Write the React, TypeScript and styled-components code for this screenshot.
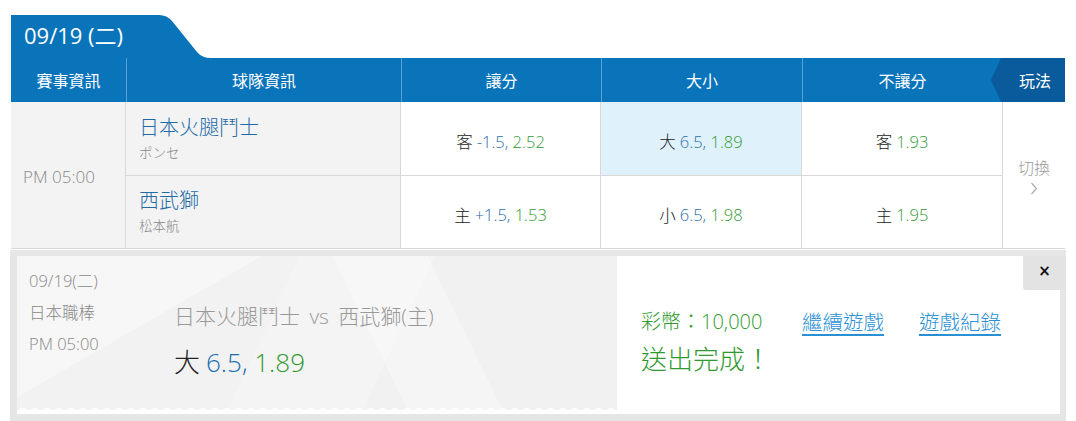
import styled, { createGlobalStyle } from 'styled-components'

const GlobalStyle = createGlobalStyle`
  html, body {
    margin: 0;
    padding: 0;
    background: #fff;
    font-family: "Open Sans", "Noto Sans CJK TC", sans-serif;
    font-weight: 300;
  }
`

const Page = styled.div`
  width: 1076px;
  height: 421px;
  padding: 15px 0 0 11px;
  box-sizing: border-box;
  overflow: hidden;
`

const DateTab = styled.div`
  width: 200px;
  height: 43px;
  background: #0a74bb;
  color: #fff;
  font-size: 22px;
  font-weight: 400;
  line-height: 40px;
  padding-left: 13px;
  box-sizing: border-box;
  clip-path: path('M0 43 L0 0 L148 0 Q156 0 161 6 L186 37 Q191 43 200 43 Z');
`

const Table = styled.div`
  width: 1054px;
  display: grid;
  grid-template-columns: 115px 275px 200px 201px 200px 63px;
  grid-template-rows: 44px 74px 73px;
  border-right: 1px solid #d8d8d8;
  box-sizing: border-box;
`

const HeadCell = styled.div`
  background: #0a74bb;
  color: #fff;
  font-size: 16px;
  font-weight: 400;
  display: flex;
  align-items: center;
  justify-content: center;
  border-left: 1px solid #5a9fd2;
  &:first-child {
    border-left: none;
  }
`

const PlayHead = styled.div`
  background: #0a74bb;
  position: relative;
  &::before {
    content: '';
    position: absolute;
    right: 0;
    top: 0;
    width: 74px;
    height: 44px;
    background: #0a5b9c;
    clip-path: polygon(10px 0, 100% 0, 100% 100%, 10px 100%, 0 50%);
  }
  span {
    position: relative;
    color: #fff;
    font-size: 16px;
    font-weight: 400;
    display: flex;
    height: 100%;
    align-items: center;
    justify-content: flex-end;
    padding-right: 14px;
  }
`

const TimeCell = styled.div`
  grid-column: 1;
  grid-row: 2 / span 2;
  background: #f3f3f3;
  border-right: 1px solid #d8d8d8;
  border-bottom: 1px solid #d8d8d8;
  color: #888;
  font-size: 17px;
  display: flex;
  align-items: center;
  padding: 2px 0 0 12px;
`

const TeamCell = styled.div<{ $first?: boolean }>`
  grid-column: 2;
  box-sizing: border-box;
  background: #f3f3f3;
  border-bottom: 1px solid #d8d8d8;
  border-right: 1px solid #d8d8d8;
  padding: ${({ $first }) => ($first ? 12 : 11)}px 0 0 13px;
`

const TeamName = styled.div`
  color: #1d6aa6;
  font-size: 20px;
  line-height: 27px;
`

const Pitcher = styled.div`
  color: #888;
  font-size: 13.5px;
  line-height: 24px;
`

const OddsCell = styled.div<{ $active?: boolean; $last?: boolean }>`
  box-sizing: border-box;
  background: ${({ $active }) => ($active ? '#dff2fb' : '#fff')};
  border-bottom: 1px solid #d8d8d8;
  border-right: ${({ $last }) => ($last ? 'none' : '1px solid #d8d8d8')};
  display: flex;
  align-items: center;
  justify-content: center;
  padding-top: 5px;
  font-size: 16.5px;
  color: #222;
  gap: 4px;
`

const Line = styled.span`
  color: #2a6fa9;
`

const Price = styled.span`
  color: #339933;
`

const SwitchCell = styled.div`
  grid-column: 6;
  grid-row: 2 / span 2;
  border-left: 1px solid #d8d8d8;
  border-bottom: 1px solid #d8d8d8;
  background: #fff;
  color: #9a9a9a;
  font-size: 16px;
  display: flex;
  flex-direction: column;
  align-items: center;
  justify-content: center;
  line-height: 22px;
  padding-top: 2px;
`

const Chevron = styled.svg`
  width: 8px;
  height: 13px;
  margin-top: 3px;
`

const Panel = styled.div`
  width: 1056px;
  margin: 1px 0 0 -1px;
  height: 171px;
  background: #e6e6e6;
  padding: 6px 6px 7px 7px;
  box-sizing: border-box;
  position: relative;
`

const PanelInner = styled.div`
  display: flex;
  height: 100%;
  background: #fff;
`

const Ticket = styled.div`
  width: 600px;
  position: relative;
  background:
    linear-gradient(150deg, rgba(255,255,255,0.35) 0 28%, transparent 28% 100%),
    linear-gradient(64deg, transparent 0 58%, rgba(255,255,255,0.3) 58% 72%, transparent 72%),
    linear-gradient(115deg, #f2f2f2 0 42%, #f4f4f4 42% 62%, #f1f1f1 62%);
  display: grid;
  grid-template-columns: 145px 1fr;
  padding: 9px 0 0 12px;
  box-sizing: border-box;
  &::after {
    content: '';
    position: absolute;
    left: 0;
    right: 0;
    bottom: 0;
    height: 13px;
    background:
      radial-gradient(circle at 6px 13px, #fff 0 5.5px, transparent 6px) 0 0 / 12px 13px repeat-x,
      linear-gradient(#fff, #fff) 0 9px / 100% 4px no-repeat;
  }
`

const MetaCol = styled.div`
  color: #888;
  font-size: 16.5px;
  line-height: 31.5px;
`

const BetCol = styled.div`
  padding-top: 36px;
`

const Matchup = styled.div`
  color: #999;
  font-size: 21px;
  line-height: 30px;
  word-spacing: 4px;
`

const BetLine = styled.div`
  font-size: 26px;
  line-height: 36px;
  margin-top: 13px;
  color: #222;
  display: flex;
  gap: 6px;
  ${Line} {
    color: #1a6eb0;
  }
  ${Price} {
    color: #2f9a2f;
  }
`

const Result = styled.div`
  padding: 51px 0 0 24px;
`

const CoinRow = styled.div`
  display: flex;
  align-items: center;
  font-size: 20px;
  line-height: 30px;
  color: #2f9a2f;
`

const Coins = styled.span`
  width: 161px;
`

const LinkText = styled.a`
  color: #2a90d6;
  text-decoration: underline;
  text-underline-offset: 4px;
  font-size: 20.5px;
  margin-right: 35px;
`

const Done = styled.div`
  font-size: 26px;
  line-height: 36px;
  margin-top: 4px;
  color: #2f9a2f;
`

const CloseButton = styled.div`
  position: absolute;
  top: 6px;
  right: 0;
  width: 43px;
  height: 34px;
  background: #e3e3e3;
  border-radius: 0 0 0 3px;
  display: flex;
  align-items: center;
  justify-content: center;
  padding-bottom: 4px;
  box-sizing: border-box;
  font-size: 15px;
  font-weight: bold;
  color: #111;
  font-family: "DejaVu Sans", sans-serif;
`

const rows = [
  {
    team: '日本火腿鬥士',
    pitcher: 'ポンセ',
    spread: ['客', '-1.5,', '2.52'],
    total: ['大', '6.5,', '1.89'],
    ml: ['客', '1.93'],
  },
  {
    team: '西武獅',
    pitcher: '松本航',
    spread: ['主', '+1.5,', '1.53'],
    total: ['小', '6.5,', '1.98'],
    ml: ['主', '1.95'],
  },
]

export default function App() {
  return (
    <Page>
      <GlobalStyle />
      <DateTab>09/19 (二)</DateTab>
      <Table>
        <HeadCell>賽事資訊</HeadCell>
        <HeadCell>球隊資訊</HeadCell>
        <HeadCell>讓分</HeadCell>
        <HeadCell>大小</HeadCell>
        <HeadCell>不讓分</HeadCell>
        <PlayHead>
          <span>玩法</span>
        </PlayHead>
        <TimeCell>PM 05:00</TimeCell>
        {rows.map((r, i) => [
          <TeamCell key={`t${i}`} $first={i === 0}>
            <TeamName>{r.team}</TeamName>
            <Pitcher>{r.pitcher}</Pitcher>
          </TeamCell>,
          <OddsCell key={`s${i}`}>
            {r.spread[0]}
            <span>
              <Line>{r.spread[1]}</Line> <Price>{r.spread[2]}</Price>
            </span>
          </OddsCell>,
          <OddsCell key={`o${i}`} $active={i === 0}>
            {r.total[0]}
            <span>
              <Line>{r.total[1]}</Line> <Price>{r.total[2]}</Price>
            </span>
          </OddsCell>,
          <OddsCell key={`m${i}`} $last>
            {r.ml[0]}
            <Price>{r.ml[1]}</Price>
          </OddsCell>,
        ])}
        <SwitchCell>
          切換
          <Chevron viewBox="0 0 8 13">
            <path d="M1.5 1 L6.5 6.5 L1.5 12" fill="none" stroke="#aaa" strokeWidth="1.2" />
          </Chevron>
        </SwitchCell>
      </Table>
      <Panel>
        <PanelInner>
          <Ticket>
            <MetaCol>
              <div>09/19(二)</div>
              <div>日本職棒</div>
              <div>PM 05:00</div>
            </MetaCol>
            <BetCol>
              <Matchup>日本火腿鬥士 vs 西武獅(主)</Matchup>
              <BetLine>
                大
                <span>
                  <Line>6.5,</Line> <Price>1.89</Price>
                </span>
              </BetLine>
            </BetCol>
          </Ticket>
          <Result>
            <CoinRow>
              <Coins>彩幣：10,000</Coins>
              <LinkText>繼續遊戲</LinkText>
              <LinkText>遊戲紀錄</LinkText>
            </CoinRow>
            <Done>送出完成！</Done>
          </Result>
        </PanelInner>
        <CloseButton>×</CloseButton>
      </Panel>
    </Page>
  )
}
